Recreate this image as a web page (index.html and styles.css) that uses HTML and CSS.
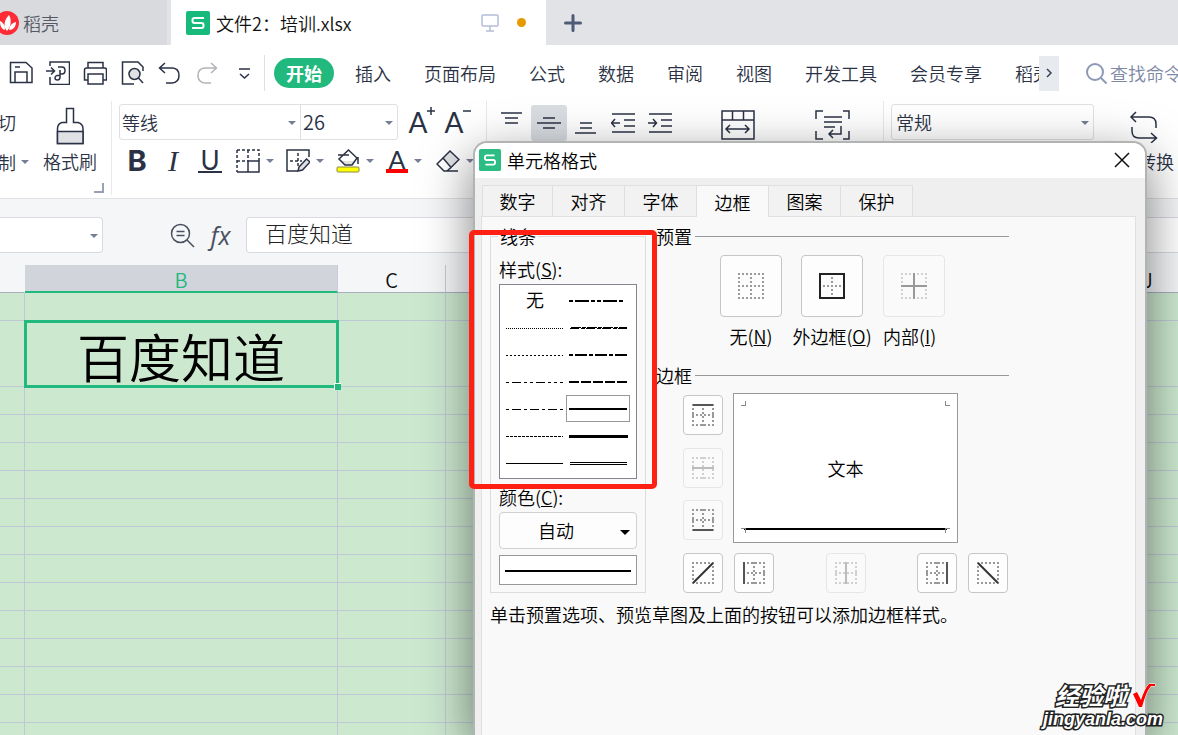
FILE: index.html
```html
<!DOCTYPE html>
<html lang="zh-CN">
<head>
<meta charset="utf-8">
<meta name="viewport" content="width=device-width, initial-scale=1">
<title>文件2：培训.xlsx</title>
<link rel="stylesheet" href="styles.css">
</head>
<body>
<svg class="defs" aria-hidden="true">
  <defs>
    <g id="grid-box" fill="none" stroke-width="2" stroke-dasharray="2 2"><path d="M0 1H22M0 21H22M1 0V22M21 0V22"/></g>
    <g id="grid-cross" fill="none" stroke-width="2" stroke-dasharray="2 2"><path d="M0 11H22M11 0V22"/></g>
    <g id="big-box" fill="none" stroke-width="2" stroke-dasharray="2 2"><path d="M0 1H26M0 25H26M1 0V26M25 0V26"/></g>
    <g id="big-cross" fill="none" stroke-width="2" stroke-dasharray="2 2"><path d="M4 13H24M13 4V24"/></g>
  </defs>
</svg>
<div class="app">
  <header class="tabbar">
    <button class="doc-tab docer" type="button">
      <svg class="docer-logo" width="24" height="24" viewBox="0 0 24 24"><circle cx="12" cy="12" r="12" fill="#ff2b36"/><path d="M12 20C8 16 9 9 14 4C17 9 16 16 12 20ZM10 19C6 18 5 14 5 10C9 12 10 15 10 19ZM14 19C15 14 17 12 21 11C21 16 18 19 14 19Z" fill="#fff"/></svg>
      <span>稻壳</span>
    </button>
    <button class="doc-tab current" type="button">
      <svg width="24" height="24" viewBox="0 0 24 24"><rect width="24" height="24" rx="2" fill="#18ba7c"/><path d="M18 7H8.500Q6.500 7 6.500 9V10Q6.500 12 8.500 12H15.500Q17.500 12 17.500 14V15Q17.500 17 15.500 17H6" fill="none" stroke="#fff" stroke-width="2"/></svg>
      <span class="doc-name">文件2：培训.xlsx</span>
      <svg width="18" height="18" viewBox="0 0 18 18" fill="none" stroke="#b4bdd6" stroke-width="1.500"><rect x="1" y="1" width="16" height="11" rx="1"/><path d="M9 12V17M5 17H13"/></svg>
      <span class="dirty"></span>
    </button>
    <button class="new-tab" type="button" aria-label="新建"><svg width="18" height="18" viewBox="0 0 18 18" stroke="#4d5a78" stroke-width="3" stroke-linecap="round"><path d="M9 1.500V16.500M1.500 9H16.500"/></svg></button>
  </header>

  <nav class="menu">
    <div class="quick">
      <button type="button" aria-label="保存"><svg class="ic" viewBox="0 0 24 24"><path d="M1.500 1.500H17L23 7V21.500H1.500ZM6 21V11H18V21M6 6H11"/></svg></button>
      <button type="button" aria-label="输出为PDF"><svg class="ic" viewBox="0 0 24 24"><path d="M4 5V1H23.500V23.500H4V16M0 10H8M5 6.500L8.500 10L5 13.500M12 6H16Q19 6 19 9.500T16 13H14M14 9V16Q14 19 11.500 19T9 17T11 14.500H14"/></svg></button>
      <button type="button" aria-label="打印"><svg class="ic" viewBox="0 0 24 24"><path d="M5 7V1.500H20V7M5 19H1.500V9Q1.500 7 3.500 7H21.500Q23.500 7 23.500 9V19H20M5 13H20V23H5Z"/></svg></button>
      <button type="button" aria-label="打印预览"><svg class="ic" viewBox="0 0 24 24"><path d="M14 23H2.500V1H18L23 6V10"/><circle cx="14.500" cy="13" r="5.500" fill="#dfe1e5"/><path d="M18.500 17L23 22"/></svg></button>
      <button type="button" aria-label="撤销"><svg class="ic" viewBox="0 0 24 24"><path d="M8 2L2.500 7L8 12M3 7H15.500Q22 7.500 22 14.500T15 22H9"/></svg></button>
      <button type="button" aria-label="恢复"><svg class="ic faded" viewBox="0 0 24 24"><path d="M17 2L22.500 7L17 12M22 7H11Q4 7.500 4 14.500T11 22H17"/></svg></button>
      <button type="button" aria-label="更多"><svg class="ic" viewBox="0 0 24 24"><path d="M8 8H19M9 13L13.500 17L18 13"/></svg></button>
    </div>
    <button class="menu-tab active" type="button">开始</button>
    <div class="menu-tabs">
      <button class="menu-tab" type="button">插入</button>
      <button class="menu-tab" type="button">页面布局</button>
      <button class="menu-tab" type="button">公式</button>
      <button class="menu-tab" type="button">数据</button>
      <button class="menu-tab" type="button">审阅</button>
      <button class="menu-tab" type="button">视图</button>
      <button class="menu-tab" type="button">开发工具</button>
      <button class="menu-tab" type="button">会员专享</button>
      <button class="menu-tab" type="button">稻壳</button>
    </div>
    <button class="more" type="button" aria-label="向右滚动"><svg width="8" height="10" viewBox="0 0 8 10" fill="none" stroke="#3a4258" stroke-width="1.500"><path d="M2 1L6 5L2 9"/></svg></button>
    <button class="search" type="button"><svg width="23" height="23" viewBox="0 0 23 23" fill="none" stroke="#8d98b5" stroke-width="2"><circle cx="10" cy="10" r="8"/><path d="M16 16L21.500 21.500"/></svg>查找命令</button>
  </nav>

  <section class="ribbon" aria-label="工具栏">
    <div class="group clip">
      <div class="clip-col">
        <button type="button" class="cut-off">切</button>
        <button type="button" class="cut-off caret">制</button>
      </div>
      <button type="button" class="brush">
        <svg width="28" height="38" viewBox="0 0 28 38" fill="none" stroke="#2b3245" stroke-width="1.500"><path d="M10.500 1.500H17.500V15.500H22Q27 17 27 21.500V36.500H1.500V21.500Q1.500 17 6 15.500H10.500Z"/><path d="M1.500 24.500H27V36.500H1.500Z" fill="#dfe1e5"/></svg>
        格式刷
      </button>
    </div>

    <div class="group font">
      <div class="row">
        <div class="pair">
          <span class="pick name"><select aria-label="字体"><option>等线</option></select></span>
          <span class="pick size"><select aria-label="字号"><option>26</option></select></span>
        </div>
        <button type="button" class="tool grow" aria-label="增大字号"><span class="letter">A</span><svg width="8" height="8" viewBox="0 0 8 8" stroke="#2b3245" stroke-width="1.500"><path d="M4 0V8M0 4H8"/></svg></button>
        <button type="button" class="tool grow" aria-label="减小字号"><span class="letter">A</span><svg width="8" height="8" viewBox="0 0 8 8" stroke="#2b3245" stroke-width="1.500"><path d="M0 4H8"/></svg></button>
      </div>
      <div class="row second">
        <button type="button" class="tool bold">B</button>
        <button type="button" class="tool italic">I</button>
        <button type="button" class="tool under">U</button>
        <button type="button" class="tool caret" aria-label="边框"><svg class="ic" viewBox="0 0 24 24"><path d="M1 1H23V12M1 1V23M12 1V12M1 12H12" stroke-dasharray="3 2"/><path d="M12 12H23V23H1M12 12V23"/></svg></button>
        <button type="button" class="tool caret" aria-label="绘制边框"><svg class="ic" viewBox="0 0 24 24"><path d="M12 22H1V1H23V8"/><path d="M12 4V18M4 12H16" stroke-dasharray="3 2"/><path d="M13 18L20.500 10L24 13L16.500 21L12 22Z" fill="#dfe1e5"/></svg></button>
        <button type="button" class="tool caret" aria-label="填充颜色"><svg class="ic" viewBox="0 0 24 24"><path d="M5 12H20L17 16H8Z" fill="#dfe1e5" stroke="none"/><path d="M12.500 1L21 9L16 16H9L3 10ZM2 6H13M22 8V15"/><rect x="1" y="18" width="22" height="5" rx="1" fill="#ff0" stroke="#8a8a4a" stroke-width="1"/></svg></button>
        <button type="button" class="tool caret color" aria-label="字体颜色"><span class="letter">A</span></button>
        <button type="button" class="tool caret" aria-label="清除"><svg class="ic" viewBox="0 0 24 24"><path d="M7 9L14 2L23 10.500L15 18.500Z" fill="#dfe1e5"/><path d="M7 9L1 15L8 22H11L15 18.500M8 22H22"/></svg></button>
      </div>
    </div>

    <div class="group align">
      <button type="button" class="tool" aria-label="顶端对齐"><svg class="ic" viewBox="0 0 24 24"><path d="M1 2H22M5 7H18M5 12H18"/></svg></button>
      <button type="button" class="tool pressed" aria-label="垂直居中"><svg class="ic" viewBox="0 0 24 24"><path d="M6 7H18M0 12H24M6 17H18"/></svg></button>
      <button type="button" class="tool" aria-label="底端对齐"><svg class="ic" viewBox="0 0 24 24"><path d="M6 12H18M6 17H18M1 22H22"/></svg></button>
      <button type="button" class="tool" aria-label="减少缩进"><svg class="ic" viewBox="0 0 24 24"><path d="M1 3H24M13 9H24M13 15H24M1 21H24M0 12H9M4 8L0.500 12L4 16"/></svg></button>
      <button type="button" class="tool" aria-label="增加缩进"><svg class="ic" viewBox="0 0 24 24"><path d="M1 3H24M13 9H24M13 15H24M1 21H24M0 12H9M5 8L8.500 12L5 16"/></svg></button>
      <button type="button" class="tool wide" aria-label="合并居中"><svg width="36" height="30" viewBox="0 0 36 30" fill="none" stroke="#2b3245" stroke-width="1.500"><path d="M2 1H34V29H2ZM2 10H34M12.500 1V10M23.500 1V10M6 19H29M10 15L6 19L10 23M25 15L29 19L25 23"/></svg></button>
      <button type="button" class="tool wide" aria-label="自动换行"><svg width="36" height="30" viewBox="0 0 36 30" fill="none" stroke="#2b3245" stroke-width="1.500"><path d="M8 1H1V9M28 1H34V9M1 21V29H8M34 21V29H28M9 7H27M9 12H27M9 17H20M26 16V24H14M18 20L14 24L18 28"/></svg></button>
    </div>

    <div class="group number">
      <span class="pick format"><select aria-label="数字格式"><option>常规</option></select></span>
      <button type="button" class="convert">
        <svg width="30" height="32" viewBox="0 0 30 32" fill="none" stroke="#2b3245" stroke-width="1.500"><path d="M7 1L2 6L7 11M2 6H20Q27 6 27 13V17M22 22L27.500 27L22 32M27 27H10Q3 27 3 20V16"/></svg>
        <span>转换</span>
      </button>
    </div>
  </section>

  <div class="formula">
    <span class="pick ref"><select aria-label="名称框"><option></option></select></span>
    <button type="button" aria-label="浏览"><svg width="25" height="25" viewBox="0 0 25 25" fill="none" stroke="#4a5060" stroke-width="1.500"><circle cx="10.500" cy="10.500" r="9"/><path d="M17 17L24 24M6.500 8.500H14.500M6.500 12.500H14.500"/></svg></button>
    <button type="button" class="fx" aria-label="插入函数">fx</button>
    <input type="text" aria-label="编辑栏" value="百度知道">
  </div>

  <main class="sheet">
    <table>
      <colgroup><col class="ca"><col class="cb"><col><col><col><col><col><col><col><col></colgroup>
      <thead><tr><th></th><th class="sel">B</th><th>C</th><th></th><th></th><th></th><th></th><th></th><th></th><th>J</th></tr></thead>
      <tbody>
        <tr><td></td><td></td><td></td><td></td><td></td><td></td><td></td><td></td><td></td><td></td></tr>
        <tr class="tall"><td></td><td class="active-cell">百度知道<i></i></td><td></td><td></td><td></td><td></td><td></td><td></td><td></td><td></td></tr>
        <tr><td></td><td></td><td></td><td></td><td></td><td></td><td></td><td></td><td></td><td></td></tr>
        <tr><td></td><td></td><td></td><td></td><td></td><td></td><td></td><td></td><td></td><td></td></tr>
        <tr><td></td><td></td><td></td><td></td><td></td><td></td><td></td><td></td><td></td><td></td></tr>
        <tr><td></td><td></td><td></td><td></td><td></td><td></td><td></td><td></td><td></td><td></td></tr>
        <tr><td></td><td></td><td></td><td></td><td></td><td></td><td></td><td></td><td></td><td></td></tr>
        <tr><td></td><td></td><td></td><td></td><td></td><td></td><td></td><td></td><td></td><td></td></tr>
        <tr><td></td><td></td><td></td><td></td><td></td><td></td><td></td><td></td><td></td><td></td></tr>
        <tr><td></td><td></td><td></td><td></td><td></td><td></td><td></td><td></td><td></td><td></td></tr>
        <tr><td></td><td></td><td></td><td></td><td></td><td></td><td></td><td></td><td></td><td></td></tr>
        <tr><td></td><td></td><td></td><td></td><td></td><td></td><td></td><td></td><td></td><td></td></tr>
        <tr><td></td><td></td><td></td><td></td><td></td><td></td><td></td><td></td><td></td><td></td></tr>
        <tr><td></td><td></td><td></td><td></td><td></td><td></td><td></td><td></td><td></td><td></td></tr>
        <tr><td></td><td></td><td></td><td></td><td></td><td></td><td></td><td></td><td></td><td></td></tr>
      </tbody>
    </table>
  </main>

  <div class="dialog" role="dialog" aria-labelledby="dlg-title">
    <div class="title">
      <svg width="22" height="22" viewBox="0 0 24 24"><rect width="24" height="24" rx="2" fill="#2bbd84"/><path d="M17 7H8.500Q6.500 7 6.500 9V10Q6.500 12 8.500 12H15.500Q17.500 12 17.500 14V15Q17.500 17 15.500 17H7" fill="none" stroke="#fff" stroke-width="2"/></svg>
      <span id="dlg-title">单元格格式</span>
      <button type="button" aria-label="关闭"><svg width="16" height="16" viewBox="0 0 16 16" stroke="#111" stroke-width="1.500"><path d="M1 1L15 15M15 1L1 15"/></svg></button>
    </div>
    <div class="dlg-tabs" role="tablist">
      <button type="button" role="tab">数字</button>
      <button type="button" role="tab">对齐</button>
      <button type="button" role="tab">字体</button>
      <button type="button" role="tab" class="on" aria-selected="true">边框</button>
      <button type="button" role="tab">图案</button>
      <button type="button" role="tab">保护</button>
    </div>
    <div class="panel">
      <div class="columns">
        <fieldset class="lines">
          <legend>线条</legend>
          <div class="label" id="style-label">样式(<u>S</u>):</div>
          <div class="styles" role="listbox" aria-labelledby="style-label">
            <button type="button" role="option">无</button>
            <button type="button" role="option" aria-label="中双点划线"><svg viewBox="0 0 60 6"><path d="M1 3H55" stroke-width="2" stroke-dasharray="4 2 14 2 4 2"/></svg></button>
            <button type="button" role="option" aria-label="点线"><svg viewBox="0 0 60 6"><path d="M1 3.500H58" stroke-dasharray="1 1"/></svg></button>
            <button type="button" role="option" aria-label="斜点划线"><svg viewBox="0 0 60 6"><path d="M3 2.500H59" stroke-dasharray="10 1 4 1"/><path d="M2 3.500H59" stroke-dasharray="9 2 4 1"/></svg></button>
            <button type="button" role="option" aria-label="细虚线"><svg viewBox="0 0 60 6"><path d="M1 3.500H58" stroke-dasharray="2 2"/></svg></button>
            <button type="button" role="option" aria-label="中点划线"><svg viewBox="0 0 60 6"><path d="M1 3H59" stroke-width="2" stroke-dasharray="4 2 12 2"/></svg></button>
            <button type="button" role="option" aria-label="双点划线"><svg viewBox="0 0 60 6"><path d="M1 3.500H58" stroke-dasharray="3 3 9 3 3 3"/></svg></button>
            <button type="button" role="option" aria-label="中虚线"><svg viewBox="0 0 60 6"><path d="M1 3H59" stroke-width="2" stroke-dasharray="10 2"/></svg></button>
            <button type="button" role="option" aria-label="点划线"><svg viewBox="0 0 60 6"><path d="M1 3.500H58" stroke-dasharray="3 3 9 3"/></svg></button>
            <button type="button" role="option" aria-label="中实线" class="chosen" aria-selected="true"><svg viewBox="0 0 60 6"><path d="M1 3H59" stroke-width="2"/></svg></button>
            <button type="button" role="option" aria-label="虚线"><svg viewBox="0 0 60 6"><path d="M1 3.500H58" stroke-dasharray="3 1"/></svg></button>
            <button type="button" role="option" aria-label="粗实线"><svg viewBox="0 0 60 6"><path d="M1 3.500H60" stroke-width="3"/></svg></button>
            <button type="button" role="option" aria-label="细实线"><svg viewBox="0 0 60 6"><path d="M1 3.500H58"/></svg></button>
            <button type="button" role="option" aria-label="双线"><svg viewBox="0 0 60 6"><path d="M2 2.500H59M2 4.500H59"/></svg></button>
          </div>
          <label class="label" for="line-color">颜色(<u>C</u>):</label>
          <span class="pick color-pick"><select id="line-color"><option>自动</option></select></span>
          <div class="sample"></div>
        </fieldset>

        <div class="side">
          <h3>预置</h3>
          <div class="presets">
            <div class="preset"><button type="button" class="sq" aria-labelledby="p1"><svg viewBox="0 0 26 26" stroke="#9b9b9b"><use href="#big-box"/><use href="#big-cross"/></svg></button><span id="p1">无(<u>N</u>)</span></div>
            <div class="preset"><button type="button" class="sq" aria-labelledby="p2"><svg viewBox="0 0 26 26" stroke="#9b9b9b"><use href="#big-cross"/><rect x="1" y="1" width="24" height="24" fill="none" stroke="#222" stroke-width="2"/></svg></button><span id="p2">外边框(<u>O</u>)</span></div>
            <div class="preset"><button type="button" class="sq" disabled aria-labelledby="p3"><svg viewBox="0 0 26 26" stroke="#d2d2d2"><use href="#big-box"/><path d="M0 13H26M13 0V26" stroke="#999" stroke-width="2"/></svg></button><span id="p3">内部(<u>I</u>)</span></div>
          </div>
          <h3>边框</h3>
          <div class="edges">
            <div class="edge-col">
              <button type="button" class="sq" aria-label="上边框"><svg viewBox="0 0 22 22" stroke="#999"><use href="#grid-box"/><use href="#grid-cross"/><path d="M1 1H21" stroke="#555" stroke-width="2"/></svg></button>
              <button type="button" class="sq" disabled aria-label="内部横线"><svg viewBox="0 0 22 22" stroke="#d0d0d0"><use href="#grid-box"/><use href="#grid-cross"/><path d="M0 11H22" stroke="#bbb" stroke-width="2"/></svg></button>
              <button type="button" class="sq flat" aria-label="下边框"><svg viewBox="0 0 22 22" stroke="#999"><use href="#grid-box"/><use href="#grid-cross"/><path d="M1 21H21" stroke="#555" stroke-width="2"/></svg></button>
            </div>
            <div class="preview">
              <span class="corners top"><i></i><i></i></span>
              <span>文本</span>
              <span class="corners bottom"><i></i><i></i></span>
            </div>
          </div>
          <div class="edge-row">
            <div>
              <button type="button" class="sq" aria-label="斜上线"><svg viewBox="0 0 22 22" stroke="#999"><use href="#grid-box"/><path d="M1 21L21 1" stroke="#333" stroke-width="2"/></svg></button>
              <button type="button" class="sq" aria-label="左边框"><svg viewBox="0 0 22 22" stroke="#999"><use href="#grid-box"/><use href="#grid-cross"/><path d="M1 0V22" stroke="#555" stroke-width="2"/></svg></button>
            </div>
            <button type="button" class="sq" disabled aria-label="内部竖线"><svg viewBox="0 0 22 22" stroke="#d0d0d0"><use href="#grid-box"/><use href="#grid-cross"/><path d="M11 0V22" stroke="#bbb" stroke-width="2"/></svg></button>
            <div>
              <button type="button" class="sq" aria-label="右边框"><svg viewBox="0 0 22 22" stroke="#999"><use href="#grid-box"/><use href="#grid-cross"/><path d="M21 0V22" stroke="#555" stroke-width="2"/></svg></button>
              <button type="button" class="sq" aria-label="斜下线"><svg viewBox="0 0 22 22" stroke="#999"><use href="#grid-box"/><path d="M1 1L21 21" stroke="#333" stroke-width="2"/></svg></button>
            </div>
          </div>
        </div>
      </div>
      <p class="note">单击预置选项、预览草图及上面的按钮可以添加边框样式。</p>
    </div>
  </div>

  <div class="highlight"></div>
  <div class="watermark">
    <div class="wm-top"><span>经验啦</span><svg width="26" height="26" viewBox="0 0 26 26"><path d="M2 12L6 10L10 18Q14 6 18 2H24V4H20Q15 10 11 25H8Z" fill="#f00" stroke="#fff" stroke-width="1"/></svg></div>
    <div class="wm-url">jingyanla.com</div>
  </div>
</div>
</body>
</html>
```
FILE: styles.css
```css
* { box-sizing: border-box; }
body {
  margin: 0;
  font: 350 18px/24px "Noto Sans CJK SC", "Noto Sans", sans-serif;
  color: #2b3245;
}
button, select, input { font: inherit; color: inherit; }
button {
  border: 0; padding: 0; background: none; white-space: nowrap;
  display: flex; align-items: center; justify-content: center;
}
svg { display: block; flex: none; }
.defs { position: absolute; width: 0; height: 0; }
.app {
  position: relative; height: 100vh; overflow: hidden;
  display: flex; flex-direction: column; background: #f5f6f8;
}
.tabbar, .menu, .ribbon, .formula { flex: none; }
.ic { width: 24px; height: 24px; fill: none; stroke: #2b3245; stroke-width: 1.5; }
.ic.faded { stroke: #b2b4b8; }

/* document tabs */
.tabbar { display: flex; height: 45px; background: #e2e3e7; }
.doc-tab { gap: 6px; }
.docer {
  width: 171px; justify-content: flex-start; gap: 4px;
  background: #d9dade; border-right: 4px solid #e2e3e7; color: #555a66;
}
.docer-logo { margin-left: -5px; }
.current { width: 375px; padding: 0 20px 0 15px; background: #fff; color: #111; }
.doc-name { flex: 1; text-align: left; }
.dirty { width: 9px; height: 9px; margin-left: 12px; border-radius: 50%; background: #e79a00; }
.new-tab { width: 54px; }

/* menu */
.menu { display: flex; align-items: center; height: 56px; background: #fff; overflow: hidden; }
.quick {
  display: flex; align-items: center; gap: 13px; height: 36px;
  padding: 0 9px; margin-right: 9px; border-right: 1px solid #dfe0e3;
}
.menu-tabs { display: flex; gap: 33px; flex: 1; min-width: 0; padding-left: 21px; overflow: hidden; }
.menu-tab.active {
  width: 60px; height: 30px; border-radius: 15px;
  background: #22b97e; color: #fff; font-weight: 700;
}
.more { width: 20px; height: 35px; background: #e7eaef; }
.search { width: 119px; padding-left: 26px; justify-content: flex-start; gap: 2px; color: #7d88a6; overflow: hidden; }

/* ribbon */
.ribbon {
  display: flex; height: 98px; background: #fff; border-bottom: 1px solid #e0e1e4;
  overflow: hidden;
}
.group { height: 94px; border-right: 1px solid #e8e9eb; padding-top: 3px; flex: none; }
.clip { position: relative; display: flex; width: 112px; }
.clip::after {
  content: ""; position: absolute; right: 7px; bottom: 2px; width: 8px; height: 8px;
  border: solid #98a0b4; border-width: 0 2px 2px 0;
}
.clip-col { display: flex; flex-direction: column; gap: 16px; width: 30px; padding-top: 6px; align-items: flex-start; }
.cut-off { margin-left: -2px; }
.brush { flex-direction: column; align-self: flex-start; gap: 4px; width: 80px; padding: 3px 0 0; }
.row { display: flex; align-items: center; height: 36px; }
.font { width: 375px; padding-left: 7px; }
.pair { display: flex; width: 279px; height: 36px; border: 1px solid #dfe0e3; border-radius: 3px; }
.pick { position: relative; display: block; }
.pick select {
  appearance: none; width: 100%; height: 100%; border: 0; padding: 0 20px 0 2px;
  background: transparent; outline: 0;
}
.pick::after, .caret::after {
  content: ""; border: solid transparent; border-width: 4px 4px 0; border-top-color: #747e96;
}
.pick::after { position: absolute; right: 4px; top: 50%; margin-top: -1px; pointer-events: none; }
.name { width: 181px; border-right: 1px solid #dfe0e3; }
.size { flex: 1; font-size: 20px; }
.tool { width: 24px; height: 24px; flex: none; }
.caret::after { margin-left: 6px; }
.cut-off.caret::after { margin-left: 5px; }
.letter { font: 400 28px/24px Lato, sans-serif; }
.grow { width: 36px; height: 30px; align-items: flex-start; }
.grow .letter { line-height: 30px; }
.pair + .grow { margin-left: 6px; }
.second { gap: 12px; margin-top: 3px; padding-left: 6px; }
.second .caret { width: 38px; justify-content: flex-start; }
.bold { font: 700 29px/24px Inter, sans-serif; }
.italic { font: italic 400 30px/24px "Liberation Serif", serif; }
.under { margin-left: 1px; margin-right: 2px; font: 400 26px/22px Lato, sans-serif; border-bottom: 2px solid #2b3245; }
.color .letter { width: 22px; height: 24px; line-height: 20px; border-bottom: 4px solid #f00; font-size: 25px; text-align: center; }
.align { display: flex; align-items: center; gap: 13px; width: 397px; height: 40px; padding: 3px 0 0 13px; }
.pressed { width: 36px; height: 36px; margin: 0 -6px; border-radius: 3px; background: #d9dde2; }
.wide { width: 36px; align-self: flex-end; height: 32px; }
.align .wide { margin-left: 35px; }
.wide + .wide { margin-left: 46px; }
.number { display: flex; flex: 1; border-right: 0; border-left: 1px solid #e8e9eb; margin-left: -1px; padding-left: 7px; }
.format { width: 203px; height: 36px; flex: none; border: 1px solid #dfe0e3; border-radius: 3px; }
.format select { padding-left: 4px; }
.convert { flex-direction: column; align-self: flex-start; gap: 6px; width: 80px; padding-top: 7px; align-items: flex-end; }
.convert svg { margin-right: 15px; }

/* formula bar */
.formula { display: flex; align-items: center; height: 66px; padding-top: 6px; }
.formula > .pick { width: 103px; height: 36px; background: #fff; border: 1px solid #d8dae0; border-left: 0; border-radius: 0 4px 4px 0; margin-right: 67px; }
.fx { width: 51px; font: italic 400 25px/30px "Open Sans", sans-serif; color: #4a5060; }
.formula input {
  flex: 1; height: 36px; padding: 0 18px 6px; border: 1px solid #d8dae0; border-right: 0;
  border-radius: 4px 0 0 4px; background: #fff; font-size: 22px; font-weight: 300; color: #222; outline: 0;
}

/* sheet */
.sheet { flex: 1; min-height: 0; overflow: hidden; background: #cce8cf; }
table { table-layout: fixed; border-collapse: separate; border-spacing: 0; width: 1202px; }
col { width: 108px; }
col.ca { width: 25px; }
col.cb { width: 313px; }
th {
  height: 28px; padding: 3px 0 0; font-weight: 350; font-size: 20px; line-height: 20px; color: #111;
  background: #f5f6f8; border-bottom: 1px solid #a9aebd; border-right: 1px solid #c8cbd6;
}
th:first-child { border-right-color: #f5f6f8; }
th.sel { background: #d2d4dc; color: #22b97e; border-bottom: 2px solid #22b97e; }
td { height: 28px; padding: 0; border-right: 1px solid #bfc9d6; border-bottom: 1px solid #bfc9d6; }
.tall td { height: 66px; }
td.active-cell {
  position: relative; padding-top: 5px; text-align: center; font-size: 52px; line-height: 58px; color: #000;
  outline: 3px solid #22b97e; outline-offset: -2px;
}
.active-cell i { position: absolute; right: -4px; bottom: -4px; width: 7px; height: 7px; background: #22b97e; border: solid #fff; border-width: 1px 0 0 1px; }

/* dialog */
.dialog {
  position: absolute; left: 473px; right: 31px; top: 141px; bottom: 0;
  display: flex; flex-direction: column;
  border: 2px solid #b2b4b4; border-bottom: 0; border-radius: 14px 14px 0 0;
  background: #efefef; color: #000; overflow: hidden;
  box-shadow: 0 16px 50px rgba(0, 0, 0, .5);
}
.title { display: flex; align-items: center; gap: 6px; height: 35px; padding: 0 15px 2px 4px; background: #fff; flex: none; }
.title span { flex: 1; }
.dlg-tabs { display: flex; align-items: flex-end; height: 38px; padding-left: 7px; flex: none; }
.dlg-tabs button { width: 72px; height: 31px; background: #f2f2f2; border: 1px solid #dfdfdf; border-width: 1px 1px 0 0; }
.dlg-tabs button:first-child { width: 71px; border-left-width: 1px; }
.dlg-tabs .on { height: 32px; margin-bottom: -1px; background: #f9f9f9; position: relative; }
.panel { flex: 1; min-height: 0; margin: 0 9px 0 6px; padding: 7px 0 0 8px; background: #f9f9f9; border: 1px solid #e0e0e0; border-bottom: 0; }
.columns { display: flex; gap: 10px; }
.lines {
  width: 156px; margin: 0; padding: 9px 8px 7px; border: 1px solid #dcdcdc;
  display: flex; flex-direction: column; flex: none; min-width: 0;
}
legend { padding: 0 2px; margin-left: -1px; }
.label { height: 24px; }
.styles {
  display: grid; grid-template-columns: 1fr 64px; padding: 2px 6px 2px 4px; margin: 3px 0 6px;
  border: 1px solid #84868f; background: #fff;
}
.styles button { height: 27px; line-height: 20px; }
.styles button:first-child { padding: 0 0 4px; }
.styles svg { width: 60px; height: 6px; fill: none; stroke: #000; stroke-width: 1; shape-rendering: crispEdges; }
.styles .chosen { border: 1px solid #999; }
.color-pick { height: 37px; margin: 3px 0 6px; background: #fdfdfd; border: 1px solid #d0d0d0; border-radius: 4px; }
.color-pick select { padding: 0 24px 2px 38px; }
.color-pick::after { right: 6px; border-width: 5px 5px 0; border-top-color: #000; }
.sample { height: 30px; padding: 14px 5px 0; border: 1px solid #999; background: #fff; }
.sample::after { content: ""; display: block; height: 2px; background: #000; }
.side { width: 353px; }
h3 { display: flex; align-items: center; gap: 3px; margin: 0; font: inherit; }
h3::after { content: ""; flex: 1; height: 1px; background: #999; }
.presets { display: grid; grid-template-columns: 80px 80px 62px; gap: 0 1px; margin: 7px 0 15px 55px; }
.preset { display: flex; flex-direction: column; align-items: center; gap: 7px; white-space: nowrap; }
.preset:last-child { align-items: flex-start; margin-left: 10px; }
.sq { width: 40px; height: 40px; border: 1px solid #c6c6c6; border-radius: 4px; background: #fdfdfd; }
.sq svg { width: 22px; height: 22px; }
.preset .sq { width: 62px; height: 62px; }
.preset .sq svg { width: 26px; height: 26px; }
.sq:disabled, .sq.flat { border-color: #e6e6e6; background: #fafafa; }
.edges { display: flex; gap: 10px; margin: 6px 0 10px 27px; }
.edge-col { display: flex; flex-direction: column; justify-content: space-between; padding: 2px 0 3px; }
.preview {
  display: flex; flex-direction: column; justify-content: space-between; align-items: center;
  width: 225px; height: 150px; padding: 7px; border: 1px solid #999; background: #fff;
}
.corners { display: flex; justify-content: space-between; width: 100%; height: 6px; }
.corners i { width: 5px; height: 5px; border: solid #888; border-width: 0 0 1px 1px; }
.corners.top i:first-child { border-width: 0 1px 1px 0; }
.corners.bottom { height: 7px; background: linear-gradient(#000, #000) center top / 203px 2px no-repeat; }
.corners.bottom i { border-width: 1px 0 0 1px; }
.corners.bottom i:first-child { border-width: 1px 1px 0 0; }
.edge-row { display: flex; justify-content: space-between; margin-left: 27px; width: 325px; }
.edge-row div { display: flex; gap: 11px; }
.note { margin: 9px 0 0; white-space: nowrap; }

/* overlays */
.highlight { position: absolute; left: 469px; top: 230px; width: 188px; height: 259px; border: 5px solid #ff2014; border-radius: 5px; }
.watermark { position: absolute; right: 15px; bottom: 6px; color: #fff; font-weight: 700; font-style: italic; -webkit-text-stroke: 3px #222; paint-order: stroke fill; }
.wm-top { display: flex; justify-content: flex-end; align-items: center; gap: 4px; margin-right: 6px; font-size: 24px; line-height: 28px; }
.wm-url { font: italic 700 18px/20px "Liberation Sans", sans-serif; }
```
